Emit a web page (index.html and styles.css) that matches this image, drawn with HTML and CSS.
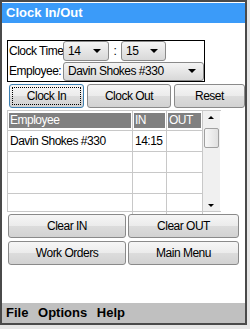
FILE: index.html
```
<!DOCTYPE html>
<html lang="en">
<head>
    <meta charset="UTF-8">
    <meta name="viewport" content="width=device-width, initial-scale=1.0">
    <title>Clock In/Out</title>
    <link rel="stylesheet" href="styles.css">
</head>
<body>
    <div class="window">
        <div class="titlebar">Clock In/Out</div>

        <div class="content">
            <!-- Time / employee picker -->
            <div class="timebox">
                <div class="row">
                    <span class="label">Clock Time</span>
                    <div class="combo hour"><span>14</span><i class="arrow"></i></div>
                    <span class="colon">:</span>
                    <div class="combo minute"><span>15</span><i class="arrow"></i></div>
                </div>
                <div class="row">
                    <span class="label">Employee:</span>
                    <div class="combo employee"><span>Davin Shokes #330</span><i class="arrow"></i></div>
                </div>
            </div>

            <div class="actions">
                <button class="btn focus clock-in">Clock In</button>
                <button class="btn clock-out">Clock Out</button>
                <button class="btn reset">Reset</button>
            </div>

            <!-- Punch list -->
            <div class="grid">
                <table>
                    <tr>
                        <th class="col-emp"><span>Employee</span></th>
                        <th class="col-in"><span>IN</span></th>
                        <th class="col-out"><span>OUT</span></th>
                    </tr>
                    <tr><td>Davin Shokes #330</td><td>14:15</td><td></td></tr>
                    <tr><td></td><td></td><td></td></tr>
                    <tr><td></td><td></td><td></td></tr>
                    <tr><td></td><td></td><td></td></tr>
                </table>
                <div class="scrollbar">
                    <i class="up"></i>
                    <div class="thumb"></div>
                    <i class="down"></i>
                </div>
            </div>

            <div class="bottom-buttons">
                <button class="btn">Clear IN</button>
                <button class="btn">Clear OUT</button>
                <button class="btn">Work Orders</button>
                <button class="btn">Main Menu</button>
            </div>
        </div>

        <div class="menubar">
            <span>File</span>
            <span>Options</span>
            <span>Help</span>
        </div>
    </div>
</body>
</html>
```

FILE: styles.css
```
body {
    margin: 0;
    padding: 0;
    background: #e6e6e6;
    font-family: "Liberation Sans", Arial, sans-serif;
    font-size: 12px;
    letter-spacing: -0.5px;
}
.window {
    box-sizing: border-box;
    width: 247px;
    height: 325px;
    border: 2px solid #4a4a4a;
    background: #fff;
    display: flex;
    flex-direction: column;
}
.titlebar {
    height: 20px;
    line-height: 20px;
    background: #3b9bf9;
    color: #fff;
    font-weight: bold;
    font-size: 13px;
    letter-spacing: 0;
    padding-left: 4px;
    margin-top: 1px;
}
.content {
    flex: 1;
    padding-left: 5px;
}
.timebox {
    box-sizing: border-box;
    width: 198px;
    height: 42px;
    margin-top: 17px;
    border: 1px solid #000;
}
.row {
    display: flex;
    align-items: center;
    height: 20px;
}
.label {
    width: 54px;
    padding-left: 1px;
    white-space: nowrap;
}
.combo {
    box-sizing: border-box;
    height: 20px;
    border: 1px solid #8a8a8a;
    border-radius: 3px;
    background: linear-gradient(#f4f4f4, #e6e6e6 50%, #d8d8d8);
    display: flex;
    align-items: center;
    justify-content: space-between;
    padding: 0 7px 0 4px;
    white-space: nowrap;
}
.hour {
    width: 46px;
}
.minute {
    width: 45px;
}
.colon {
    width: 12px;
    text-align: center;
}
.employee {
    width: 141px;
    height: 19px;
}
.arrow {
    width: 0;
    height: 0;
    border-left: 4px solid transparent;
    border-right: 4px solid transparent;
    border-top: 4px solid #000;
}
.actions {
    display: flex;
    gap: 3px;
    margin-top: 2px;
    padding-left: 2px;
}
.btn {
    box-sizing: border-box;
    height: 24px;
    padding: 0;
    font-family: inherit;
    font-size: 12px;
    letter-spacing: -0.5px;
    color: #000;
    border: 1px solid #8a8a8a;
    border-radius: 3px;
    background: linear-gradient(#f6f6f6, #ebebeb 50%, #dcdcdc 51%, #d2d2d2);
}
.btn.focus {
    border-color: #3c7fb1;
    outline: 1px dotted #000;
    outline-offset: -4px;
}
.clock-in {
    width: 76px;
}
.clock-out {
    width: 85px;
}
.reset {
    width: 72px;
}
.grid {
    display: flex;
    margin-top: 2px;
    width: 214px;
    height: 102px;
    box-sizing: border-box;
    border: 1px solid #c8c8c8;
    border-right: none;
}
table {
    border-collapse: collapse;
    width: 195px;
}
th, td {
    border: 1px solid #c8c8c8;
    padding: 0;
    text-align: left;
    font-weight: normal;
    height: 20px;
    white-space: nowrap;
}
th {
    height: 17px;
    padding: 1px 1px;
    border-top: none;
}
tr:last-child td {
    border-bottom: none;
}
th:first-child, td:first-child {
    border-left: none;
}
th span {
    display: block;
    background: #808080;
    color: #fff;
    height: 15px;
    line-height: 15px;
    padding-left: 1px;
}
td {
    padding-left: 2px;
}
.col-emp {
    width: 122px;
}
.col-in {
    width: 31px;
}
.scrollbar {
    position: relative;
    width: 17px;
    background: #f0f0f0;
}
.scrollbar .up,
.scrollbar .down {
    position: absolute;
    left: 5px;
    width: 0;
    height: 0;
    border-left: 3px solid transparent;
    border-right: 3px solid transparent;
}
.scrollbar .up {
    top: 5px;
    border-bottom: 3px solid #000;
}
.scrollbar .down {
    bottom: 4px;
    border-top: 3px solid #000;
}
.thumb {
    position: absolute;
    top: 17px;
    left: 1px;
    width: 13px;
    height: 18px;
    border: 1px solid #a0a0a0;
    border-radius: 2px;
    background: linear-gradient(90deg, #f8f8f8, #e0e0e0);
}
.bottom-buttons {
    display: grid;
    grid-template-columns: 118px 111px;
    column-gap: 2px;
    row-gap: 3px;
    margin-top: 2px;
    padding-left: 1px;
}
.menubar {
    height: 20px;
    line-height: 20px;
    background: #c0c0c0;
    font-weight: bold;
    font-size: 13px;
    letter-spacing: 0;
    padding-left: 4px;
}
.menubar span {
    margin-right: 6px;
}
```
